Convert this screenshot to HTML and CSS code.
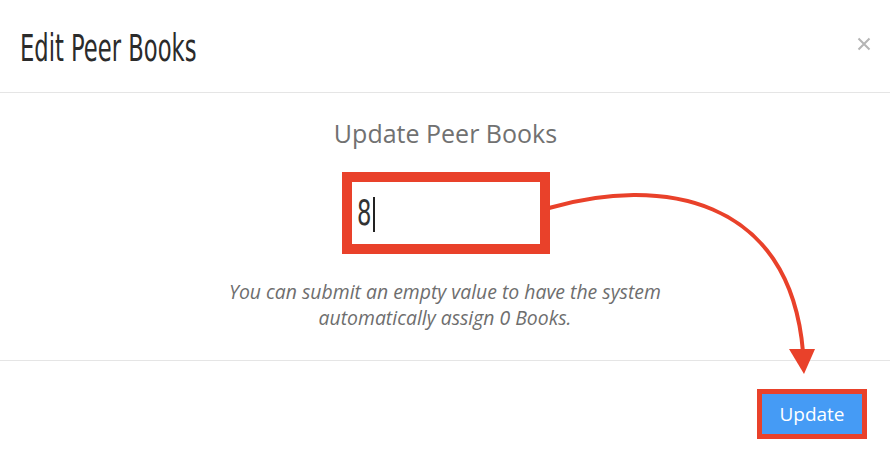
FILE: index.html
```html
<!DOCTYPE html>
<html>
<head>
<meta charset="utf-8">
<link rel="stylesheet" href="styles.css">
</head>
<body>
<div class="modal">
  <div class="modal-header">
    <h1 class="modal-title">Edit Peer Books</h1>
    <button class="close" aria-label="Close">
      <svg width="14" height="14" viewBox="0 0 14 14"><path d="M1.5 1.5 L12.5 12.5 M12.5 1.5 L1.5 12.5" stroke="#b5b5b5" stroke-width="2" fill="none"/></svg>
    </button>
  </div>
  <div class="modal-body">
    <h2 class="subtitle">Update Peer Books</h2>
    <div class="highlight field-frame">
      <div class="field"><span class="value">8</span><span class="caret"></span></div>
    </div>
    <p class="help">You can submit an empty value to have the system<br>automatically assign 0 Books.</p>
  </div>
  <div class="modal-footer">
    <div class="highlight btn-frame">
      <button class="btn-primary">Update</button>
    </div>
  </div>
  <svg class="arrow" width="890" height="464" viewBox="0 0 890 464">
    <path d="M549 208 C 660 176, 790 196, 803 352" stroke="#e9412a" stroke-width="4" fill="none"/>
    <polygon points="789,349 815,349 804,374" fill="#e9412a"/>
  </svg>
</div>
</body>
</html>
```
FILE: styles.css
```css
html, body {
  margin: 0;
  padding: 0;
  background: #fff;
}
body {
  width: 890px;
  height: 464px;
  overflow: hidden;
  font-family: "Open Sans", "Liberation Sans", sans-serif;
}
.modal {
  position: relative;
  width: 890px;
  height: 464px;
}
.modal-header {
  height: 92px;
  border-bottom: 1px solid #e5e5e5;
  display: flex;
  align-items: center;
  justify-content: space-between;
  padding: 0 19px 0 20px;
}
.modal-title {
  margin: 0;
  font-family: "DejaVu Sans Condensed", "Liberation Sans", sans-serif;
  font-weight: normal;
  font-size: 30px;
  color: #2b2b2b;
  transform: scale(0.84, 1.26);
  transform-origin: left center;
  margin-top: 2px;
}
.close {
  border: 0;
  background: none;
  padding: 0;
  width: 14px;
  height: 14px;
  margin-top: -4px;
  display: flex;
}
.modal-body {
  height: 268px;
  border-bottom: 1px solid #e5e5e5;
  display: flex;
  flex-direction: column;
  align-items: center;
  padding-top: 23px;
  box-sizing: border-box;
}
.subtitle {
  margin: 0;
  font-weight: normal;
  font-size: 25px;
  line-height: 34px;
  color: #717171;
  padding-left: 1px;
}
.highlight {
  border-style: solid;
  border-color: #e9412a;
  background: #fff;
}
.field-frame {
  margin-top: 22px;
  border-width: 10px;
  width: 188px;
  height: 62px;
  margin-left: 2px;
}
.field {
  height: 62px;
  display: flex;
  align-items: center;
  padding-left: 5px;
}
.value {
  font-family: "DejaVu Sans Condensed", "Liberation Sans", sans-serif;
  font-size: 36px;
  color: #333;
  line-height: 40px;
  margin-top: 0;
  display: inline-block;
  transform: scaleX(0.7);
  transform-origin: left center;
  margin-right: -6px;
}
.caret {
  width: 2px;
  height: 35px;
  background: #222;
  margin-left: 1px;
  margin-top: 2px;
}
.help {
  margin: 25px 0 0;
  text-align: center;
  font-style: italic;
  font-size: 19.4px;
  line-height: 26px;
  color: #6e6e6e;
}
.modal-footer {
  display: flex;
  justify-content: flex-end;
  padding: 28px 23px 0 0;
}
.btn-frame {
  border-width: 5px;
  display: flex;
}
.btn-primary {
  width: 100px;
  height: 40px;
  border: 0;
  margin: 0;
  background: #459bf5;
  color: #fff;
  font-family: "Open Sans", sans-serif;
  font-size: 19px;
  padding: 0 0 1px;
}
.arrow {
  position: absolute;
  left: 0;
  top: 0;
  pointer-events: none;
}
```
